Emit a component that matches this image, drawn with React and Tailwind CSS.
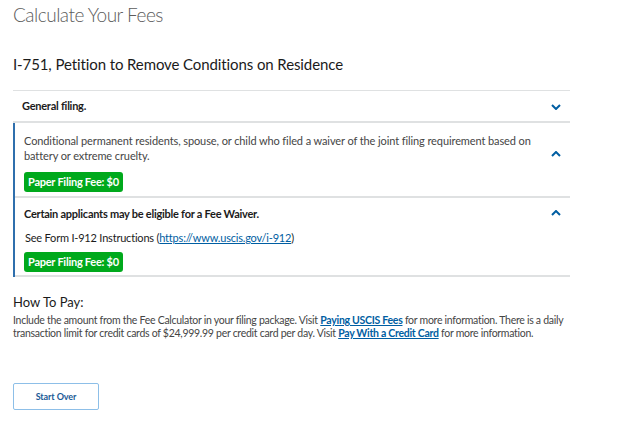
import React from "react";

const lato = { fontFamily: "Lato, 'Open Sans', sans-serif" };

function Chevron({ up }) {
  return (
    <svg width="10" height="6" viewBox="0 0 10 6" className="block text-[#005ea2]">
      <path
        d={up ? "M1 5 L5 1 L9 5" : "M1 1 L5 5 L9 1"}
        fill="none"
        stroke="currentColor"
        strokeWidth="2"
      />
    </svg>
  );
}

function Fee() {
  return (
    <span className="inline-flex items-center h-[20px] bg-[#00a91c] text-white font-bold text-[11px] tracking-[-0.25px] px-[4px] rounded-[3px]">
      Paper Filing Fee: $0
    </span>
  );
}

export default function App() {
  return (
    <div className="w-[640px] h-[437px] bg-white px-[13px] pt-[3px] overflow-hidden" style={lato}>
      <h1 className="text-[19px] tracking-[-0.5px] font-light text-[#5c5c5c] leading-[24px]">
        Calculate Your Fees
      </h1>
      <h2 className="text-[15px] tracking-[-0.1px] text-[#1b1b1b] leading-[20px] mt-[27px]">
        I-751, Petition to Remove Conditions on Residence
      </h2>

      <div className="w-[557px] mt-[16px] border-t border-[#dfe1e2]">
        <div className="flex items-center justify-between pl-[9px] pr-[9px] h-[32px] pt-[1px] border-b-2 border-[#dfe1e2]">
          <span className="text-[11px] tracking-[-0.25px] font-bold text-[#1b1b1b]">General filing.</span>
          <Chevron />
        </div>

        <div className="border-l-2 border-[#2f6fad]">
          <div className="relative pl-[9px] pr-[26px] pt-[10px] pb-[4px] border-b-2 border-[#dfe1e2]">
            <p className="text-[11px] tracking-[-0.1px] leading-[15px] text-[#454545]">
              Conditional permanent residents, spouse, or child who filed a waiver of the joint filing requirement based on
              battery or extreme cruelty.
            </p>
            <div className="absolute right-[9px] top-[28px]">
              <Chevron up />
            </div>
            <div className="mt-[9px] flex">
              <Fee />
            </div>
          </div>

          <div className="relative pl-[9px] pr-[26px] pt-[8px] pb-[3px] border-b-2 border-[#dfe1e2]">
            <p className="text-[11px] tracking-[-0.25px] leading-[15px] font-bold text-[#1b1b1b]">
              Certain applicants may be eligible for a Fee Waiver.
            </p>
            <div className="absolute right-[9px] top-[12px]">
              <Chevron up />
            </div>
            <p className="text-[11px] tracking-[-0.2px] leading-[15px] text-[#1b1b1b] mt-[9px] pl-[1px]">
              See Form I-912 Instructions (
              <span className="text-[#005ea2] underline">https://www.uscis.gov/i-912</span>)
            </p>
            <div className="mt-[7px] flex">
              <Fee />
            </div>
          </div>
        </div>
      </div>

      <h3 className="text-[13px] leading-[16px] text-[#1b1b1b] mt-[17px]">How To Pay:</h3>
      <p className="text-[10.5px] tracking-[-0.28px] leading-[13px] text-[#454545] mt-[4px] w-[570px]">
        Include the amount from the Fee Calculator in your filing package. Visit{" "}
        <span className="text-[#005ea2] underline font-bold">Paying USCIS Fees</span> for more information. There is a
        daily transaction limit for credit cards of $24,999.99 per credit card per day. Visit{" "}
        <span className="text-[#005ea2] underline font-bold">Pay With a Credit Card</span> for more information.
      </p>

      <button className="block mt-[43px] w-[86px] h-[27px] border border-[#8dbfe8] rounded-[2px] text-[9px] tracking-[-0.1px] font-bold text-[#1a5a96]">
        Start Over
      </button>
    </div>
  );
}
